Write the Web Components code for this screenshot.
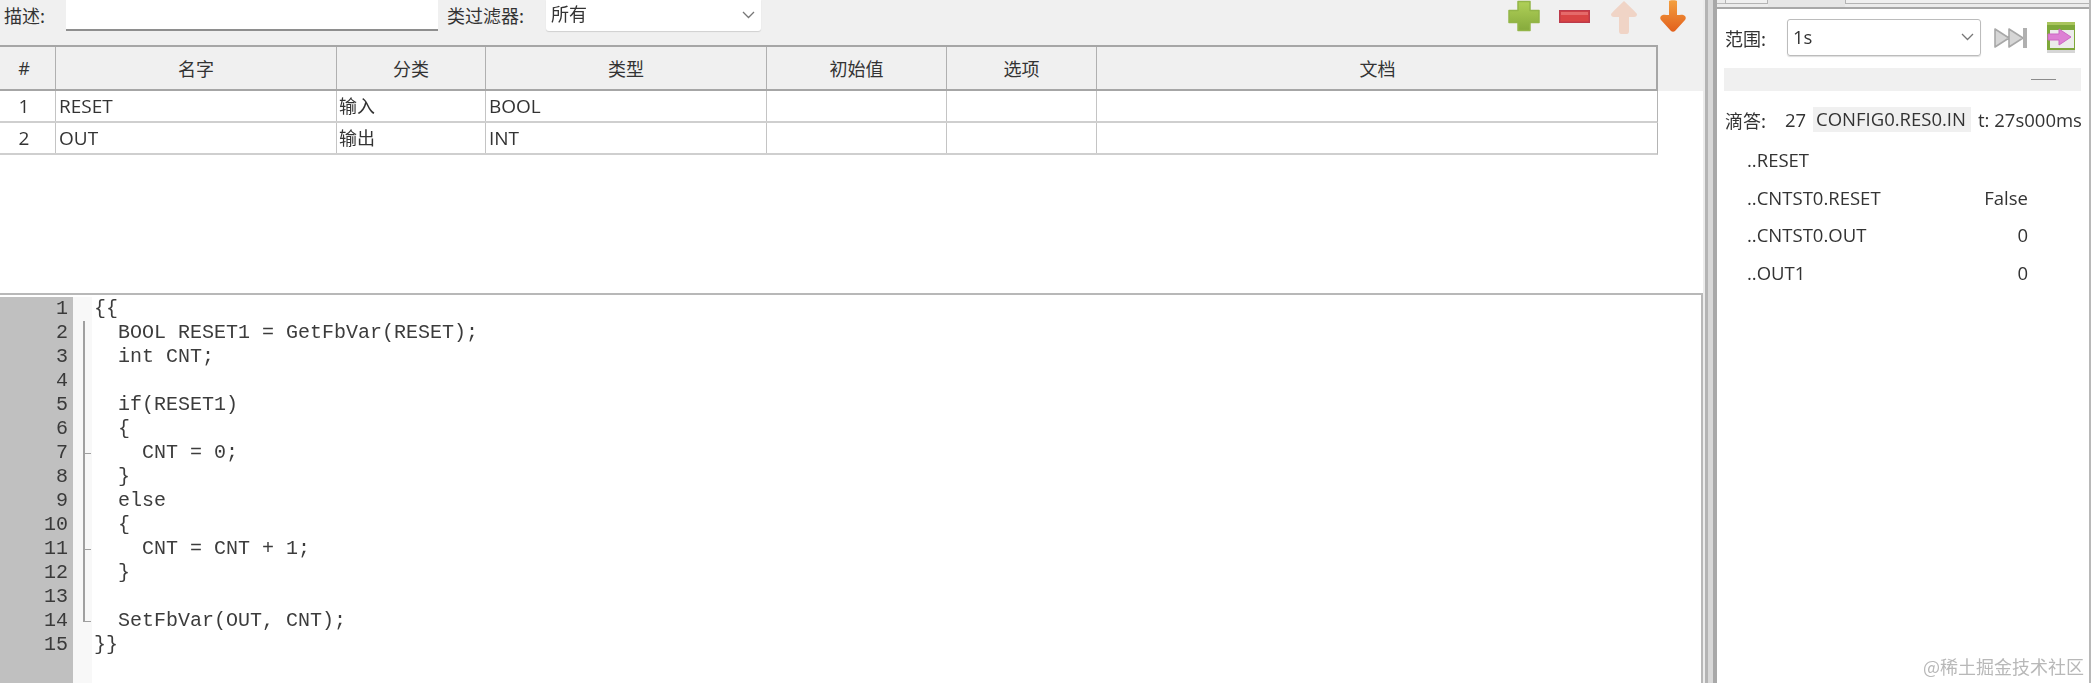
<!DOCTYPE html>
<html lang="zh">
<head>
<meta charset="utf-8">
<style>
html,body{margin:0;padding:0;width:2091px;height:683px;overflow:hidden;background:#fff;font-family:"Open Sans","Noto Sans CJK SC",sans-serif;color:#333}
</style>
</head>
<body>
<template id="t-shell">
<style>
:host{display:flex;width:2091px;height:683px;position:relative;overflow:hidden;filter:blur(.35px)}
.left{width:1703px;flex:none;display:flex;flex-direction:column}
.split{width:14px;flex:none;display:flex}
.split i{display:block}
.a{width:2px;background:#ececec}
.b{width:3px;background:#b4b4b4}
.c{width:5px;background:#d8d8d8}
.d{width:4px;background:#a8a8a8}
.right{flex:1;min-width:0}
.mark{position:absolute;right:7px;bottom:5px;height:24px;font:18px/24px "Noto Sans CJK SC",sans-serif;color:#b8b8b8;white-space:nowrap}
</style>
<div class="left"><slot name="left"></slot></div>
<div class="split"><i class="a"></i><i class="b"></i><i class="c"></i><i class="d"></i></div>
<div class="right"><slot name="right"></slot></div>
<div class="mark">@稀土掘金技术社区</div>
</template>

<template id="t-toolbar">
<style>
:host{display:flex;align-items:flex-start;height:45px;background:#f0f0f0;box-sizing:border-box;color:#333}
.lab{font:18px/30px "Noto Sans CJK SC",sans-serif;white-space:nowrap}
.l1{margin-left:4px;width:62px}
.input{width:372px;height:31px;box-sizing:border-box;background:#fff;border-bottom:2px solid #8e8e8e;flex:none}
.l2{margin-left:9px;width:99px}
.sel{width:215px;height:31px;box-sizing:border-box;background:#fff;border-radius:0 0 3px 3px;box-shadow:0 1px 1px #d0d0d0;display:flex;align-items:center;justify-content:space-between;padding:0 6px 2px 5px;font:18px/28px "Noto Sans CJK SC",sans-serif;flex:none}
.sel span{position:relative;top:-2px}
.icons{margin-left:auto;margin-right:16px;display:flex;align-items:flex-start}
svg{display:block;flex:none}
</style>
<div class="lab l1">描述:</div>
<div class="input"></div>
<div class="lab l2">类过滤器:</div>
<div class="sel"><span>所有</span><svg width="13" height="8" viewBox="0 0 13 8"><path d="M1 1l5.500 5.500L12 1" fill="none" stroke="#777" stroke-width="1.300"/></svg></div>
<div class="icons">
<svg width="32" height="32" viewBox="0 0 32 32"><defs><linearGradient id="g1" x1="0" y1="0" x2="0" y2="1"><stop offset="0" stop-color="#b0d058"/><stop offset="1" stop-color="#86aa3c"/></linearGradient></defs><path d="M10 1.500h12v9h9v12h-9v8H10v-8H1v-12h9z" fill="url(#g1)" stroke="#93b548" stroke-width="1.500" stroke-linejoin="round"/></svg>
<svg style="margin:10px 0 0 19px" width="31" height="13" viewBox="0 0 31 13"><rect x=".7" y=".7" width="29.600" height="11.600" fill="#d94444" stroke="#bc3a4a" stroke-width="1.400"/><rect x="2" y="2" width="27" height="3" fill="#e56a6a"/></svg>
<svg style="margin-left:20px" width="28" height="34" viewBox="0 0 28 34"><path d="M14 1c4 4 9 8 13 13 0 2-1 3-3 3h-5v14c0 2-1 3-2 3h-6c-1 0-2-1-2-3V17H4c-2 0-3-1-3-3 4-5 9-9 13-13z" fill="#f0d4c6"/></svg>
<svg style="margin-left:21px" width="28" height="34" viewBox="0 0 28 34"><defs><linearGradient id="g2" x1="0" y1="0" x2="0" y2="1"><stop offset="0" stop-color="#f4a040"/><stop offset="1" stop-color="#e2601c"/></linearGradient></defs><path d="M10 1c0-1 8-1 8 0v14c3 0 6-1 8 1 1 1 1 3 0 4L16 31c-1 1-3 1-4 0L2 20c-1-1-1-3 0-4 2-2 5-1 8-1z" fill="url(#g2)"/></svg>
</div>
</template>

<template id="t-table">
<style>
:host{display:block;flex:none;color:#333}
.head{background:#f0f0f0;height:46px}
.row{display:grid;grid-template-columns:56px 281px 149px 281px 180px 150px 561px;width:1658px;box-sizing:border-box}
.head .row{height:46px;border-top:2px solid #a6a6a6;border-bottom:2px solid #a6a6a6;border-right:2px solid #a6a6a6}
.head .c{border-right:1px solid #b0b0b0;display:flex;align-items:center;justify-content:center;font:18px/1 "Noto Sans CJK SC",sans-serif}
.head .c:last-child{border-right:0}
.body .row{height:32px;border-bottom:2px solid #cfcfcf;border-right:1px solid #b4b4b4}
.body .c{border-right:1px solid #c4c4c4;display:flex;align-items:center;padding-left:3px;font:19px/1 "Open Sans",sans-serif;min-width:0;overflow:hidden;box-sizing:border-box}
.body .c:last-child{border-right:0}
.body .n{padding:0 7px 0 0;justify-content:center}
.body .z{font:18px/1 "Noto Sans CJK SC",sans-serif;padding:0 0 3px 2px}
</style>
<div class="head"><div class="row">
<div class="c" style="padding-right:7px;font-family:'Open Sans',sans-serif;font-size:18px">#</div><div class="c">名字</div><div class="c">分类</div><div class="c">类型</div><div class="c">初始值</div><div class="c">选项</div><div class="c">文档</div>
</div></div>
<div class="body">
<div class="row"><div class="c n">1</div><div class="c">RESET</div><div class="c z">输入</div><div class="c">BOOL</div><div class="c"></div><div class="c"></div><div class="c"></div></div>
<div class="row"><div class="c n">2</div><div class="c">OUT</div><div class="c z">输出</div><div class="c">INT</div><div class="c"></div><div class="c"></div><div class="c"></div></div>
</div>
</template>

<template id="t-editor">
<style>
:host{display:flex;flex:1;min-height:0;margin-top:138px;border-top:2px solid #b8b8b8;border-right:2px solid #b8b8b8;background:#fff;box-sizing:border-box;padding-top:2px}
.nums{width:73px;flex:none;background:#c0c0c0;font:20px/24px "Liberation Mono",monospace;color:#3a3a3a;text-align:right;padding:0 5px 0 0;box-sizing:border-box;white-space:pre}
.fold{width:19px;flex:none;background:#f8f8f8;position:relative}
.fold .v{position:absolute;left:10px;top:24px;width:2px;height:301px;background:#a0a0a0}
.fold .t{position:absolute;left:11px;width:7px;height:1px;background:#a0a0a0}
.code{flex:1;margin:0;padding:0 0 0 2px;font:20px/24px "Liberation Mono",monospace;color:#3c3c3c;white-space:pre}
</style>
<div class="nums" id="n"></div>
<div class="fold"><div class="v"></div><div class="t" style="top:156px"></div><div class="t" style="top:252px"></div><div class="t" style="top:324px"></div></div>
<pre class="code"><slot></slot></pre>
</template>

<template id="t-debug">
<style>
:host{display:block;height:683px;box-sizing:border-box;border-right:2px solid #b8b8b8;background:#fff;color:#333;font:18.500px/24px "Open Sans",sans-serif}
.tabs{height:9px;background:#ececec;border-bottom:2px solid #a8a8a8;box-sizing:border-box;display:flex}
.tabs i{display:block;box-sizing:border-box;height:4px}
.t1{width:8px;border-bottom:1px solid #bbb}
.t2{width:43px;border:1px solid #b4b4b4;border-top:0;background:#f0f0f0}
.t3{width:77px;background:#e6e6e6;height:7px!important}
.t4{flex:1;border:1px solid #b4b4b4;border-top:0;border-right:0;background:#f0f0f0}
.bar{display:flex;align-items:center;padding:10px 0 0 8px;height:47px;box-sizing:border-box}
.bar .lab{font:18px/1 "Noto Sans CJK SC",sans-serif;width:62px;flex:none;white-space:nowrap}
.sel{width:194px;height:37px;box-sizing:border-box;flex:none;border:1px solid #bcbcbc;border-radius:3px;box-shadow:0 1px 1px #ddd;display:flex;align-items:center;justify-content:space-between;padding:0 6px 2px 5px}
.skip{margin-left:13px}
.exp{margin-left:19px}
svg{display:block;flex:none}
.gray{margin:12px 8px 0 7px;height:23px;background:#f0f0f0;display:flex;align-items:center;justify-content:flex-end;padding-right:25px}
.gray i{display:block;width:25px;height:1px;background:#8c8c8c}
.tick{display:flex;align-items:center;height:25px;margin:16px 0 0 8px;white-space:nowrap}
.tick .lab{font:18px/1 "Noto Sans CJK SC",sans-serif;width:60px;flex:none}
.tick .num{width:28px;flex:none}
.tick .chip{background:#f0f0f0;padding:0 0 0 3px;height:25px;line-height:24px;width:158px;flex:none;box-sizing:border-box;overflow:hidden}
.tick .t{margin-left:7px}
.vars{margin:9px 0 0 30px;width:281px}
</style>
<div class="tabs"><i class="t1"></i><i class="t2"></i><i class="t3"></i><i class="t4"></i></div>
<div class="bar"><div class="lab">范围:</div>
<div class="sel"><span>1s</span><svg width="13" height="8" viewBox="0 0 13 8"><path d="M1 1l5.500 5.500L12 1" fill="none" stroke="#777" stroke-width="1.300"/></svg></div>
<svg class="skip" width="34" height="22" viewBox="0 0 34 22"><path d="M1 2l14 9L1 20zM15 2l14 9-14 9z" fill="#d6d6d6" stroke="#a8a8a8" stroke-width="1.600" stroke-linejoin="round"/><rect x="29" y="1" width="4" height="20" fill="#b0b0b0"/></svg>
<svg class="exp" width="28" height="31" viewBox="0 0 28 31"><rect x="0" y="0" width="28" height="28" fill="#7ea83a"/><rect x="0" y="0" width="28" height="3" fill="#a8c45c"/><rect x="3" y="8" width="24" height="18" fill="#ececec"/><rect x="0" y="28" width="28" height="3" fill="#bbb" opacity=".6"/><path d="M1 12h11V7l12 8-12 8v-5H1z" fill="#dd80d4" stroke="#cc66c4"/></svg>
</div>
<div class="gray"><i></i></div>
<div class="tick"><div class="lab">滴答:</div><span class="num">27</span><span class="chip">CONFIG0.RES0.IN</span><span class="t">t: 27s000ms</span></div>
<div class="vars"><slot></slot></div>
</template>

<template id="t-var">
<style>
:host{display:flex;justify-content:space-between;height:37.500px;line-height:37.500px;white-space:nowrap}
</style>
<span id="a"></span><span id="b"></span>
</template>

<script>
function mount(el,id){const r=el.attachShadow({mode:"open"});r.appendChild(document.getElementById(id).content.cloneNode(true));return r}
customElements.define("ide-shell",class extends HTMLElement{constructor(){super();mount(this,"t-shell")}});
customElements.define("var-toolbar",class extends HTMLElement{constructor(){super();mount(this,"t-toolbar")}});
customElements.define("var-table",class extends HTMLElement{constructor(){super();mount(this,"t-table")}});
customElements.define("code-editor",class extends HTMLElement{constructor(){super();const r=mount(this,"t-editor");r.getElementById("n").textContent=Array.from({length:15},(_,i)=>i+1).join("\n")}});
customElements.define("debug-panel",class extends HTMLElement{constructor(){super();mount(this,"t-debug")}});
customElements.define("debug-var",class extends HTMLElement{constructor(){super();mount(this,"t-var")}
connectedCallback(){const r=this.shadowRoot;r.getElementById("a").textContent=this.getAttribute("name");r.getElementById("b").textContent=this.getAttribute("value")||""}});
</script>

<ide-shell>
<var-toolbar slot="left"></var-toolbar>
<var-table slot="left"></var-table>
<code-editor slot="left">{{
  BOOL RESET1 = GetFbVar(RESET);
  int CNT;

  if(RESET1)
  {
    CNT = 0;
  }
  else
  {
    CNT = CNT + 1;
  }

  SetFbVar(OUT, CNT);
}}</code-editor>
<debug-panel slot="right">
<debug-var name="..RESET"></debug-var>
<debug-var name="..CNTST0.RESET" value="False"></debug-var>
<debug-var name="..CNTST0.OUT" value="0"></debug-var>
<debug-var name="..OUT1" value="0"></debug-var>
</debug-panel>
</ide-shell>
</body>
</html>
